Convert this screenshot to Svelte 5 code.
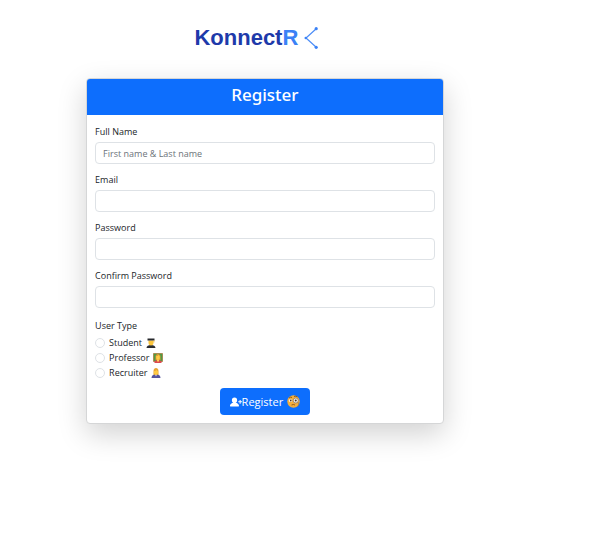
<script>
  const fields = [
    { id: 'name', label: 'Full Name', type: 'text', placeholder: 'First name & Last name' },
    { id: 'email', label: 'Email', type: 'email', placeholder: '' },
    { id: 'password', label: 'Password', type: 'password', placeholder: '' },
    { id: 'confirm', label: 'Confirm Password', type: 'password', placeholder: '' }
  ];
  const types = ['Student', 'Professor', 'Recruiter'];
</script>

<main>
  <div class="brand">
    <span>Konnect<b>R</b></span>
    <svg width="14" height="24" viewBox="0 0 14 24" aria-hidden="true">
      <path d="M12.500 2.500 2 12l10.500 9.500" fill="none" stroke="#4c8df7" stroke-width="1.200" />
      <circle cx="12.200" cy="2.700" r="1.600" fill="#3b82f6" />
      <circle cx="1.800" cy="12" r="1.300" fill="#3b82f6" />
      <circle cx="12.200" cy="21.300" r="1.600" fill="#3b82f6" />
    </svg>
  </div>

  <section class="card">
    <h1>Register</h1>
    <form onsubmit={(e) => e.preventDefault()}>
      {#each fields as f}
        <div class="field">
          <label for={f.id}>{f.label}</label>
          <input id={f.id} type={f.type} placeholder={f.placeholder} />
        </div>
      {/each}

      <fieldset>
        <legend>User Type</legend>
        {#each types as t}
          <label class="option">
            <input type="radio" name="userType" value={t} />
            <span>{t}</span>
            <svg width="10" height="10" viewBox="0 0 20 20" aria-hidden="true">
              {#if t === 'Student'}
                <path d="M1 20c0-4 4-6 9-6s9 2 9 6z" fill="#292b30" />
                <path d="M5 5h10v5c0 3-2 5-5 5s-5-2-5-5z" fill="#fcc63c" />
                <path d="M3 1h14v4H3z" fill="#26282c" />
                <path d="M16 4v5" stroke="#e3a321" stroke-width="1.200" />
              {:else if t === 'Professor'}
                <path d="M1 1h18v16H1z" fill="#4f9b45" stroke="#a77738" stroke-width="1.500" />
                <path d="M3 20v-3c1-2 4-3 7-3s6 1 7 3v3z" fill="#dd4b50" />
                <path d="M8 13h4v3l-2 2-2-2z" fill="#ffd052" />
                <path d="M5 14V7c0-7 10-7 10 0v7z" fill="#e09a32" />
                <path d="M6.500 6c3 0 4-1 5-2l2 3v3c0 5-7 5-7 0z" fill="#ffcc45" />
              {:else}
                <path d="M5 14V6c0-8 10-8 10 0v8z" fill="#e8a433" />
                <path d="M1 20c0-5 3-7 9-7s9 2 9 7z" fill="#55549b" />
                <path d="M8 13h4l-2 4z" fill="#e9e9f4" />
                <path d="M6 6c3 0 4-1 5-2l3 3v3c0 5-8 5-8 0z" fill="#ffca43" />
              {/if}
            </svg>
          </label>
        {/each}
      </fieldset>

      <button type="submit">
        <svg width="12" height="12" viewBox="0 0 16 16" fill="#fff" aria-hidden="true">
          <path d="M1 14s-1 0-1-1 1-4 6-4 6 3 6 4-1 1-1 1zm5-5a3.500 3.500 0 1 0 0-7 3.500 3.500 0 0 0 0 7" />
          <path d="M13.500 5.200v5M11 7.700h5" fill="none" stroke="#fff" stroke-width="1.400" />
        </svg>
        <span>Register</span>
        <svg class="face" width="13" height="13" viewBox="0 0 26 26" aria-hidden="true">
          <circle cx="13" cy="13" r="12.500" fill="#f5ae3c" />
          <circle cx="7" cy="11" r="3.200" fill="#fff" />
          <circle cx="7.500" cy="11" r="1.800" fill="#51351d" />
          <circle cx="17.500" cy="11" r="5" fill="#f1f2f4" stroke="#85705c" stroke-width="1.400" />
          <circle cx="17.500" cy="11" r="2" fill="#51351d" />
          <path d="M4 6q3-3 6-1M14 3q4-2 7 1M9 20q4-2 7 0" fill="none" stroke="#70451c" stroke-width="1.600" />
          <path d="M22 14q2 4 0 9" fill="none" stroke="#7b6650" stroke-width="1.200" />
        </svg>
      </button>
    </form>
  </section>
</main>

<style>
  :global(body) {
    background: #fff;
  }
  main {
    display: flex;
    flex-direction: column;
    align-items: center;
    gap: 27px;
    padding: 25px 12% 40px 0;
    font-family: 'Open Sans', 'Noto Sans', sans-serif;
    font-size: 9px;
    line-height: 15px;
    color: #212529;
  }
  .brand {
    display: flex;
    align-items: center;
    gap: 6px;
    padding-right: 17px;
    font: bold 22px/26px 'Liberation Sans', Arial, sans-serif;
    color: #1e3aaa;
  }
  .brand b {
    color: #3b82f6;
  }
  .card {
    box-sizing: border-box;
    width: 67.5%;
    min-width: 260px;
    border: 1px solid #d5d6d7;
    border-radius: 4px;
    background: #fff;
    box-shadow: 0 10px 29px rgba(0, 0, 0, 0.18);
  }
  h1 {
    margin: 0;
    padding: 4px 0 8px;
    border-radius: 3px 3px 0 0;
    background: #0d6efd;
    color: #fff;
    font-family: 'Noto Sans', 'Open Sans', sans-serif;
    font-size: 17px;
    line-height: 24px;
    font-weight: 500;
    text-align: center;
  }
  form {
    display: flex;
    flex-direction: column;
    padding: 9px 8px 8px;
  }
  .field {
    display: flex;
    flex-direction: column;
    gap: 3px;
    margin-bottom: 8px;
  }
  .field input {
    box-sizing: border-box;
    width: 100%;
    height: 22px;
    padding: 0 7px;
    border: 1px solid #dee2e6;
    border-radius: 4px;
    background: #fff;
    font: inherit;
    color: inherit;
  }
  .field input::placeholder {
    color: #6c737a;
    opacity: 1;
  }
  fieldset {
    display: flex;
    flex-direction: column;
    margin: 0 0 8px;
    padding: 0;
    border: 0;
  }
  legend {
    padding: 2px 0;
  }
  .option {
    display: flex;
    align-items: center;
    align-self: flex-start;
    gap: 4px;
  }
  .option input {
    appearance: none;
    box-sizing: border-box;
    width: 10px;
    height: 10px;
    margin: 0;
    border: 1px solid #dee2e6;
    border-radius: 50%;
    background: #fff;
  }
  .option input:checked {
    border: 3px solid #0d6efd;
  }
  button {
    display: flex;
    align-items: center;
    align-self: center;
    height: 27px;
    padding: 0 10px;
    border: 0;
    border-radius: 4px;
    background: #0d6efd;
    color: #fff;
    font: inherit;
    font-size: 11px;
    cursor: pointer;
  }
  .face {
    margin-left: 4px;
  }
</style>
